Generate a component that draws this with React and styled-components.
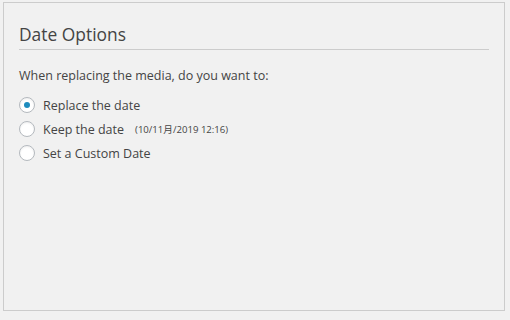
import React from "react";
import styled, { createGlobalStyle } from "styled-components";

const Global = createGlobalStyle`
  html, body { margin: 0; padding: 0; background: #f1f1f1; }
  body { font-family: "Segoe UI", "Open Sans", "Noto Sans", sans-serif; color: #444; }
`;

const Page = styled.div`
  padding: 2px 6px 10px 3px;
`;

const Panel = styled.section`
  box-sizing: border-box;
  width: 502px;
  height: 309px;
  border: 1px solid #cccccc;
  background: #f1f1f1;
  padding: 18px 15px 0 15px;
`;

const Title = styled.h3`
  margin: 0;
  font-size: 17.4px;
  font-weight: 400;
  color: #444;
  line-height: 26px;
  padding-bottom: 2px;
  border-bottom: 1px solid #cccccc;
`;

const Intro = styled.p`
  margin: 17px 0 11px 0;
  font-size: 12.5px;
  line-height: 18px;
  color: #444;
`;

const List = styled.ul`
  list-style: none;
  margin: 0;
  padding: 0;
  display: flex;
  flex-direction: column;
  gap: 6px;
`;

const Item = styled.li`
  display: flex;
  align-items: center;
  height: 18px;
  font-size: 12.5px;
  color: #444;
`;

const Radio = styled.span`
  box-sizing: border-box;
  width: 16px;
  height: 16px;
  border-radius: 50%;
  border: 1px solid #b4b9be;
  background: #fff;
  box-shadow: inset 0 1px 2px rgba(0, 0, 0, 0.07);
  margin-right: 8px;
  display: flex;
  align-items: center;
  justify-content: center;
  &::after {
    content: "";
    width: 6px;
    height: 6px;
    border-radius: 50%;
    background: ${(p) => (p.$checked ? "#1e8cbe" : "transparent")};
  }
`;

const Small = styled.span`
  font-size: 9.6px;
  margin-left: 11px;
  font-family: "Segoe UI", "Open Sans", "Noto Sans CJK JP", sans-serif;
`;

export default function App() {
  return (
    <>
      <Global />
      <Page>
        <Panel>
          <Title>Date Options</Title>
          <Intro>When replacing the media, do you want to:</Intro>
          <List>
            <Item>
              <Radio $checked />
              Replace the date
            </Item>
            <Item>
              <Radio />
              Keep the date
              <Small>(10/11月/2019 12:16)</Small>
            </Item>
            <Item>
              <Radio />
              Set a Custom Date
            </Item>
          </List>
        </Panel>
      </Page>
    </>
  );
}
